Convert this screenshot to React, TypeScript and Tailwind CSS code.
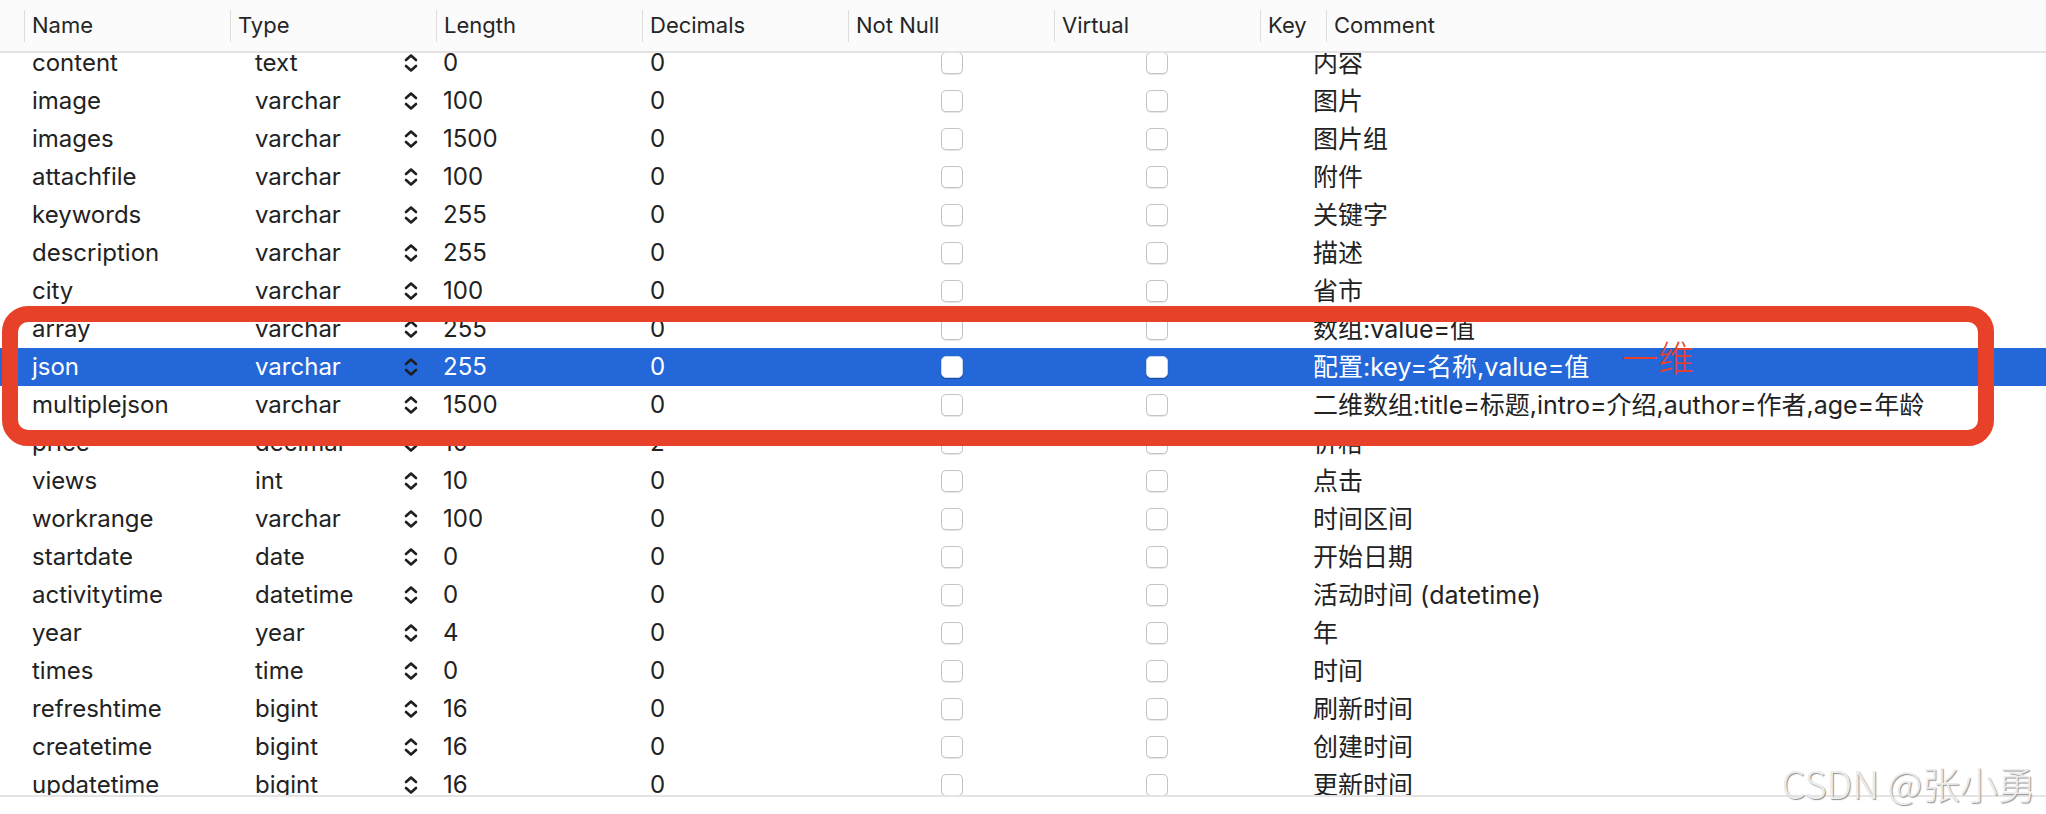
import React from "react";

type Row = { name: string; type: string; len: string; dec: string; comment: string };

const rows: Row[] = [
  { name: "content", type: "text", len: "0", dec: "0", comment: "内容" },
  { name: "image", type: "varchar", len: "100", dec: "0", comment: "图片" },
  { name: "images", type: "varchar", len: "1500", dec: "0", comment: "图片组" },
  { name: "attachfile", type: "varchar", len: "100", dec: "0", comment: "附件" },
  { name: "keywords", type: "varchar", len: "255", dec: "0", comment: "关键字" },
  { name: "description", type: "varchar", len: "255", dec: "0", comment: "描述" },
  { name: "city", type: "varchar", len: "100", dec: "0", comment: "省市" },
  { name: "array", type: "varchar", len: "255", dec: "0", comment: "数组:value=值" },
  { name: "json", type: "varchar", len: "255", dec: "0", comment: "配置:key=名称,value=值" },
  { name: "multiplejson", type: "varchar", len: "1500", dec: "0", comment: "二维数组:title=标题,intro=介绍,author=作者,age=年龄" },
  { name: "price", type: "decimal", len: "10", dec: "2", comment: "价格" },
  { name: "views", type: "int", len: "10", dec: "0", comment: "点击" },
  { name: "workrange", type: "varchar", len: "100", dec: "0", comment: "时间区间" },
  { name: "startdate", type: "date", len: "0", dec: "0", comment: "开始日期" },
  { name: "activitytime", type: "datetime", len: "0", dec: "0", comment: "活动时间 (datetime)" },
  { name: "year", type: "year", len: "4", dec: "0", comment: "年" },
  { name: "times", type: "time", len: "0", dec: "0", comment: "时间" },
  { name: "refreshtime", type: "bigint", len: "16", dec: "0", comment: "刷新时间" },
  { name: "createtime", type: "bigint", len: "16", dec: "0", comment: "创建时间" },
  { name: "updatetime", type: "bigint", len: "16", dec: "0", comment: "更新时间" },
];

const grid =
  "grid grid-cols-[24px_206px_206px_206px_206px_206px_206px_66px_1fr]";

function Chevrons() {
  return (
    <svg width="18" height="22" viewBox="0 0 18 22" className="shrink-0">
      <path d="M4 8 L9 3.5 L14 8" fill="none" stroke="#1f1f1f" strokeWidth="2.6" strokeLinecap="round" strokeLinejoin="round" />
      <path d="M4 14 L9 18.5 L14 14" fill="none" stroke="#1f1f1f" strokeWidth="2.6" strokeLinecap="round" strokeLinejoin="round" />
    </svg>
  );
}

function Check({ sel }: { sel: boolean }) {
  return (
    <div
      className={
        "w-[22px] h-[22px] rounded-[5px] border " +
        (sel
          ? "bg-white border-[#c9d6ee] shadow-[0_1px_1px_rgba(0,0,0,0.3)]"
          : "bg-white border-[#c4c4c4] shadow-[0_1px_1px_rgba(0,0,0,0.1)]")
      }
    />
  );
}

function HeaderCell({ label }: { label: string }) {
  return (
    <div className="h-full flex items-center">
      <div className="h-[32px] border-l border-[#dcdcdc] flex items-center pl-[7px] text-[#262626]">
        {label}
      </div>
    </div>
  );
}

export default function App() {
  const font = "font-['Inter','Noto_Sans_CJK_SC',sans-serif]";
  return (
    <div className={"w-[2046px] h-[814px] bg-white relative overflow-hidden " + font}>
      <div className="h-[797px] flex flex-col overflow-hidden border-b-2 border-[#e4e4e4]">
        <div className={grid + " relative z-10 h-[53px] shrink-0 bg-[#fbfbfb] border-b-2 border-[#e3e3e3] text-[22px]"}>
          <div />
          <HeaderCell label="Name" />
          <HeaderCell label="Type" />
          <HeaderCell label="Length" />
          <HeaderCell label="Decimals" />
          <HeaderCell label="Not Null" />
          <HeaderCell label="Virtual" />
          <HeaderCell label="Key" />
          <HeaderCell label="Comment" />
        </div>
        <div className="-mt-[9px] flex flex-col text-[24px]">
          {rows.map((r) => {
            const sel = r.name === "json";
            const txt = sel ? "text-white" : "text-[#222222]";
            return (
              <div
                key={r.name}
                className={grid + " h-[38px] shrink-0 items-center whitespace-nowrap " + txt + (sel ? " bg-[#2367d9]" : "")}
              >
                <div />
                <div className="pl-[8px]">{r.name}</div>
                <div className="flex items-center pl-[25px] pr-[16px]">
                  <span className="flex-1">{r.type}</span>
                  <Chevrons />
                </div>
                <div className="pl-[7px]">{r.len}</div>
                <div className="pl-[8px]">{r.dec}</div>
                <div className="pl-[93px]">
                  <Check sel={sel} />
                </div>
                <div className="pl-[92px]">
                  <Check sel={sel} />
                </div>
                <div />
                <div className="-ml-[13px] text-[25px] leading-[38px]">{r.comment}</div>
              </div>
            );
          })}
        </div>
      </div>

      <div className="absolute left-[2px] top-[306px] w-[1992px] h-[140px] border-[16px] border-[#e8412a] rounded-[26px] pointer-events-none" />
      <div className="absolute left-[1622px] top-[338px] text-[36px] leading-none text-[#ec3f2a] font-light font-['Noto_Sans_CJK_SC',sans-serif]">
        一维
      </div>
      <div className="absolute right-[10px] bottom-[12px] text-[38px] leading-none text-[#ececec] font-light font-['Noto_Sans_CJK_SC',sans-serif] [text-shadow:1px_1px_1px_#8f8f8f]">
        CSDN @张小勇
      </div>
    </div>
  );
}
